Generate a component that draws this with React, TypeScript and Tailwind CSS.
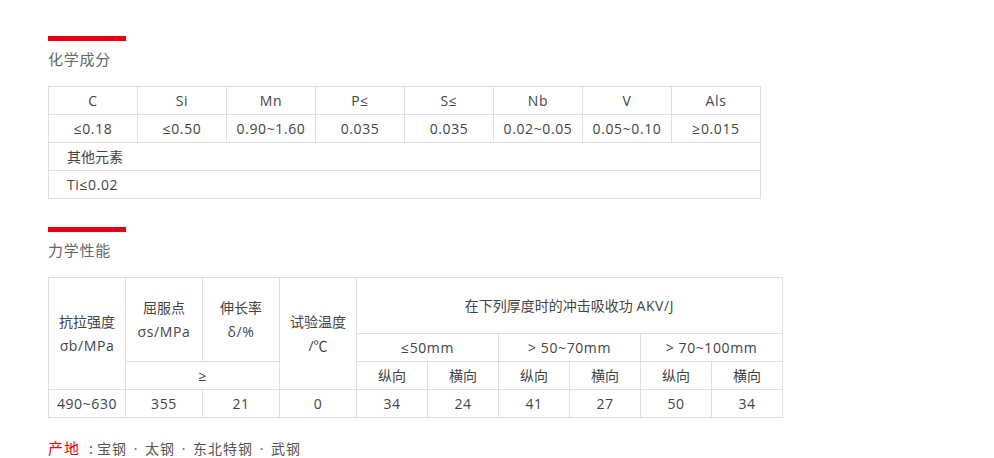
import React from "react";

const chem = [
  ["C", "≤0.18"],
  ["Si", "≤0.50"],
  ["Mn", "0.90~1.60"],
  ["P≤", "0.035"],
  ["S≤", "0.035"],
  ["Nb", "0.02~0.05"],
  ["V", "0.05~0.10"],
  ["Als", "≥0.015"],
];

const impact = ["34", "24", "41", "27", "50", "34"];
const origins = ["宝钢", "太钢", "东北特钢", "武钢"];

const td = "border border-[#dddddd] text-center align-middle p-0";
const lat = "tracking-[0.6px]";

function SectionTitle({ title }: { title: string }) {
  return (
    <div>
      <div className="h-[5px] w-[78px] bg-[#e60012]" />
      <h3 className="mt-[8px] text-[15px] leading-[20px] tracking-[0.75px] text-[#666666] font-normal">{title}</h3>
    </div>
  );
}

export default function App() {
  return (
    <div
      className="bg-white pl-[48px] pt-[36px] text-[14px] text-[#444444]"
      style={{ fontFamily: '"Open Sans", "Noto Sans CJK SC", sans-serif' }}
    >
      <SectionTitle title="化学成分" />

      {/* 化学成分 table */}
      <table className="mt-[17px] w-[713px] table-fixed border-collapse">
        <tbody>
          <tr className="h-[28px]">
            {chem.map(([k]) => (
              <td key={k} className={`${td} ${lat}`}>{k}</td>
            ))}
          </tr>
          <tr className="h-[28px]">
            {chem.map(([k, v]) => (
              <td key={k} className={`${td} ${lat}`}>{v}</td>
            ))}
          </tr>
          <tr className="h-[28px]">
            <td colSpan={8} className={`${td} !text-left !pl-[18px]`}>其他元素</td>
          </tr>
          <tr className="h-[28px]">
            <td colSpan={8} className={`${td} ${lat} !text-left !pl-[18px]`}>Ti≤0.02</td>
          </tr>
        </tbody>
      </table>

      <div className="mt-[28px]">
        <SectionTitle title="力学性能" />
      </div>

      {/* 力学性能 table */}
      <table className="mt-[17px] w-[735px] table-fixed border-collapse leading-[24px]">
        <colgroup>
          <col className="w-[77px]" />
          <col className="w-[77px]" />
          <col className="w-[77px]" />
          <col className="w-[77px]" />
          <col className="w-[71px]" />
          <col className="w-[71px]" />
          <col className="w-[71px]" />
          <col className="w-[71px]" />
          <col className="w-[71px]" />
          <col className="w-[71px]" />
        </colgroup>
        <tbody>
          <tr className="h-[56px]">
            <td rowSpan={3} className={td}>
              抗拉强度
              <br />
              <span className={lat}>σb/MPa</span>
            </td>
            <td rowSpan={2} className={td}>
              屈服点
              <br />
              <span className={lat}>σs/MPa</span>
            </td>
            <td rowSpan={2} className={td}>
              伸长率
              <br />
              <span className={lat}>δ/%</span>
            </td>
            <td rowSpan={3} className={td}>
              试验温度
              <br />
              /℃
            </td>
            <td colSpan={6} className={td}>
              在下列厚度时的冲击吸收功 <span className={lat}>AKV/J</span>
            </td>
          </tr>
          <tr className={`h-[28px] ${lat}`}>
            <td colSpan={2} className={td}>≤50mm</td>
            <td colSpan={2} className={td}>&gt; 50~70mm</td>
            <td colSpan={2} className={td}>&gt; 70~100mm</td>
          </tr>
          <tr className="h-[28px]">
            <td colSpan={2} className={td}>≥</td>
            <td className={td}>纵向</td>
            <td className={td}>横向</td>
            <td className={td}>纵向</td>
            <td className={td}>横向</td>
            <td className={td}>纵向</td>
            <td className={td}>横向</td>
          </tr>
          <tr className={`h-[28px] ${lat}`}>
            <td className={td}>490~630</td>
            <td className={td}>355</td>
            <td className={td}>21</td>
            <td className={td}>0</td>
            {impact.map((v, i) => (
              <td key={i} className={td}>{v}</td>
            ))}
          </tr>
        </tbody>
      </table>

      <p className="mt-[20px] leading-[20px] tracking-[1px] text-[#555555]">
        <span className="text-[15px] tracking-[1px] text-[#e60012]">产地</span>
        <span className="inline-block w-[17px] pr-[3px] text-right text-[15px] text-[#e60012]">:</span>
        {origins.map((o, i) => (
          <React.Fragment key={o}>
            {i > 0 && <span className="inline-block w-[18px] text-center">·</span>}
            {o}
          </React.Fragment>
        ))}
      </p>
    </div>
  );
}
